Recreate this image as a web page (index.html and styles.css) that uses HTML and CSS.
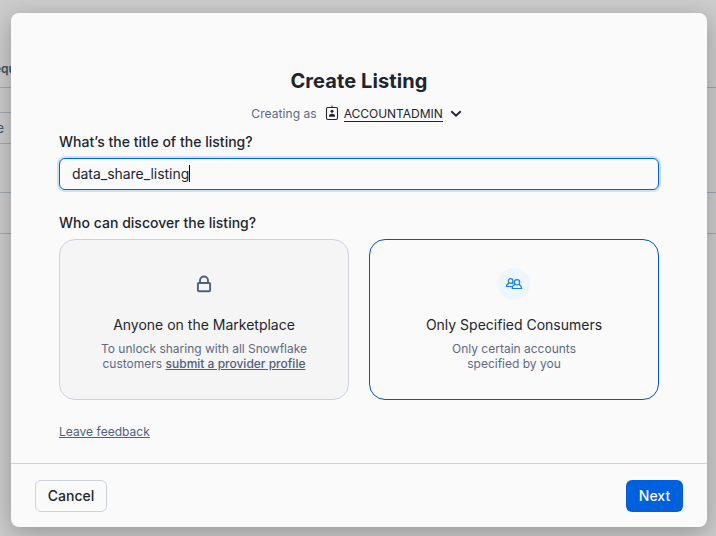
FILE: index.html
```html
<!DOCTYPE html>
<html lang="en">
<head>
<meta charset="utf-8">
<title>Create Listing</title>
<link rel="stylesheet" href="styles.css">
</head>
<body>
<div class="backdrop">
  <div class="row row-head"><span>equ</span></div>
  <div class="row row-search"><div class="field">e</div></div>
  <div class="row row-item"></div>
</div>
<div class="modal" role="dialog">
  <main class="body">
    <h1>Create Listing</h1>
    <div class="role">
      <span class="muted">Creating as</span>
      <svg class="badge" width="14" height="16" viewBox="0 0 14 16"><rect x="1.500" y="2.500" width="11" height="12" rx="1.500" fill="none" stroke="#1e252f" stroke-width="1.100"/><path d="M7 .5v2.200" stroke="#1e252f"/><circle cx="7" cy="6.300" r="1.500" fill="#1e252f"/><path d="M4 11.700V11c0-1.500 1.200-2.200 3-2.200s3 .7 3 2.200v.7z" fill="#1e252f"/></svg>
      <span class="role-name">ACCOUNTADMIN</span>
      <svg class="chevron" width="12" height="8" viewBox="0 0 12 8"><path d="M1.300 1.300L6 5.800l4.700-4.500" fill="none" stroke="#1e252f" stroke-width="1.900"/></svg>
    </div>
    <h2>What’s the title of the listing?</h2>
    <div class="input"><span>data_share_listing</span><i class="caret"></i></div>
    <h2 class="second">Who can discover the listing?</h2>
    <div class="cards">
      <section class="card disabled">
        <div class="icon"><svg width="16" height="18" viewBox="0 0 16 18"><rect x="1.900" y="8" width="12.200" height="8.200" rx="1" fill="none" stroke="#4f5f80" stroke-width="1.900"/><path d="M4 8V5.500a4 4 0 0 1 8 0V8" fill="none" stroke="#4f5f80" stroke-width="1.900"/></svg></div>
        <h3>Anyone on the Marketplace</h3>
        <p>To unlock sharing with all Snowflake<br>customers <a>submit a provider profile</a></p>
      </section>
      <section class="card selected">
        <div class="icon round"><svg width="18" height="14" viewBox="0 0 18 14" fill="none" stroke="#1a7bf0" stroke-width="1.200"><circle cx="5.600" cy="4" r="2.300"/><path d="M7.600 9.500H1.400C1.400 7.800 2.500 6.900 4.100 6.400M7.100 6.400l1.200.5"/><circle cx="12" cy="5.300" r="2.700"/><path d="M10.100 7.500C8.300 8.200 7.200 9.200 7.200 11.500h9.400c0-2.300-1-3.300-2.700-4"/></svg></div>
        <h3>Only Specified Consumers</h3>
        <p>Only certain accounts<br>specified by you</p>
      </section>
    </div>
    <a class="feedback">Leave feedback</a>
  </main>
  <footer>
    <button class="cancel">Cancel</button>
    <button class="next">Next</button>
  </footer>
</div>
</body>
</html>
```
FILE: styles.css
```css
* { box-sizing: border-box; }
body {
  margin: 0;
  height: 536px;
  overflow: hidden;
  background: #cccccc;
  color: #1e252f;
  font-family: Inter, "Liberation Sans", sans-serif;
}
.row { border-bottom: 1px solid #a1a7b1; }
.row-head {
  height: 88px;
  padding-top: 61px;
  font-size: 12px;
  line-height: 15px;
  font-weight: 600;
  color: #414e67;
}
.row-head span { margin-left: -6px; }
.row-search { height: 105px; padding-top: 24px; }
.field {
  width: 100px;
  height: 32px;
  border: 1px solid #a1a7b1;
  border-left: 0;
  font-size: 14px;
  line-height: 30px;
  color: #4c5870;
  text-indent: -4px;
}
.row-item { height: 41px; }
.modal {
  position: absolute;
  left: 11px;
  top: 13px;
  width: 696px;
  height: 514px;
  display: flex;
  flex-direction: column;
  background: #fafafa;
  border-radius: 8px;
  box-shadow: 0 6px 24px rgba(0, 0, 0, .27);
}
.body { flex: 1; padding: 56px 48px 0; }
h1, h2, h3, p { margin: 0; }
h1 {
  text-align: center;
  font-size: 20px;
  line-height: 24px;
  font-weight: 700;
  letter-spacing: .1px;
}
.role {
  display: flex;
  justify-content: center;
  align-items: center;
  height: 18px;
  margin-top: 12px;
  margin-right: 5px;
  font-size: 12px;
  line-height: 14px;
  letter-spacing: .07px;
}
.muted { color: #5d6a85; }
.badge { margin: -3px 5px 0 8px; }
.role-name { border-bottom: 1px solid #1e252f; height: 15px; letter-spacing: -.03px; }
.chevron { margin-left: 7px; margin-top: -1px; }
h2 {
  margin-top: 10px;
  font-size: 14px;
  line-height: 18px;
  font-weight: 500;
  letter-spacing: .02px;
}
.input {
  display: flex;
  align-items: center;
  height: 32px;
  margin-top: 7px;
  padding: 0 12px 1px;
  border: 1px solid #0061d9;
  border-radius: 6px;
  box-shadow: 0 0 0 2px #cce1fa;
  font-size: 14px;
  line-height: 17px;
  letter-spacing: -.04px;
}
.caret { width: 1px; height: 17px; background: #000; }
.second { margin-top: 24px; }
.cards {
  display: grid;
  grid-template-columns: 1fr 1fr;
  gap: 20px;
  margin-top: 7px;
}
.card {
  height: 161px;
  padding-top: 28px;
  border: 1px solid #cbd2df;
  border-radius: 16px;
  text-align: center;
}
.disabled { background: #f5f5f5; }
.selected { border-color: #0054cf; }
.icon {
  display: flex;
  align-items: center;
  justify-content: center;
  width: 32px;
  height: 32px;
  margin: 0 auto;
}
.round { border-radius: 50%; background: #edf6ff; }
h3 {
  margin-top: 16px;
  font-size: 14px;
  line-height: 18px;
  font-weight: 400;
}
.card p {
  margin-top: 7px;
  font-size: 12px;
  line-height: 15px;
  color: #5d6a85;
}
.card a { color: #4f5f80; font-weight: 500; text-decoration: underline; }
.feedback {
  display: inline-block;
  margin-top: 24px;
  font-size: 12px;
  line-height: 16px;
  color: #4f5f80;
  text-decoration: underline;
  letter-spacing: .03px;
}
footer {
  height: 64px;
  display: flex;
  justify-content: space-between;
  padding: 16px 24px 0;
  border-top: 1px solid #cbd2df;
}
button {
  height: 32px;
  padding: 0;
  border: 0;
  border-radius: 6px;
  font: 500 14px/30px Inter, "Liberation Sans", sans-serif;
}
.cancel { width: 72px; border: 1px solid #cbd2df; background: #fafafa; color: #1e252f; }
.next { width: 57px; background: #0061de; color: #fafafa; }
```
